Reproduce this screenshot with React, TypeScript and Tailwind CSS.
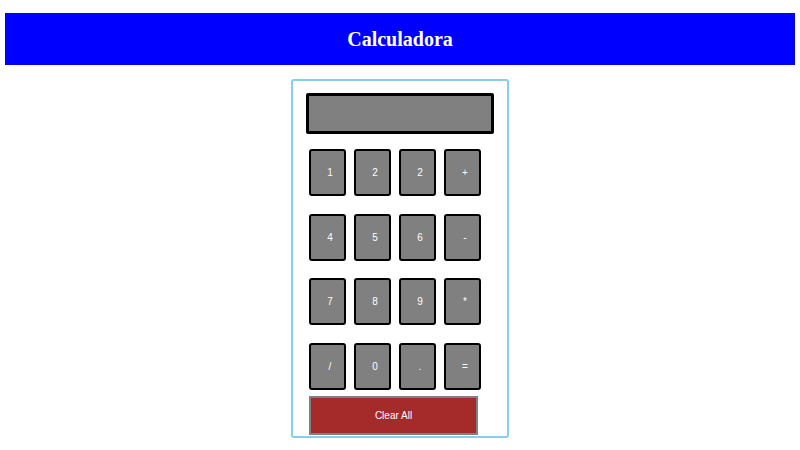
const keys = ['1', '2', '2', '+', '4', '5', '6', '-', '7', '8', '9', '*', '/', '0', '.', '=']

const App = () => {
   return (
      <div className="min-h-[450px] bg-white px-[5px] pt-[13px]">
         <header className="flex h-[52px] items-center justify-center bg-[#0000ff]">
            <h1 className="font-['Liberation_Serif',serif] text-[20px] font-bold text-white">
               Calculadora
            </h1>
         </header>
         <div className="mx-auto mt-[14px] w-[218px] rounded-[3px] border-2 border-[#87ceeb] pt-[12px] pb-[1px]">
            <div className="mx-auto h-[41px] w-[188px] rounded-[2px] border-[3px] border-black bg-[#808080]" />
            <div className="mt-[15px] ml-[16px] grid grid-cols-[repeat(4,37px)] gap-x-[8px] gap-y-[17.5px]">
               {keys.map((k, i) => (
                  <button
                     key={i}
                     className="flex h-[47px] items-center justify-center rounded-[3px] border-2 border-black bg-[#808080] pl-[5px] font-['Liberation_Sans',sans-serif] text-[10px] text-white"
                  >
                     {k}
                  </button>
               ))}
            </div>
            <button className="mt-[6px] ml-[16px] flex h-[39px] w-[169px] items-center justify-center border-2 border-[#808080] bg-[#a52a2a] font-['Liberation_Sans',sans-serif] text-[10px] text-white">
               Clear All
            </button>
         </div>
      </div>
   )
}

export default App
